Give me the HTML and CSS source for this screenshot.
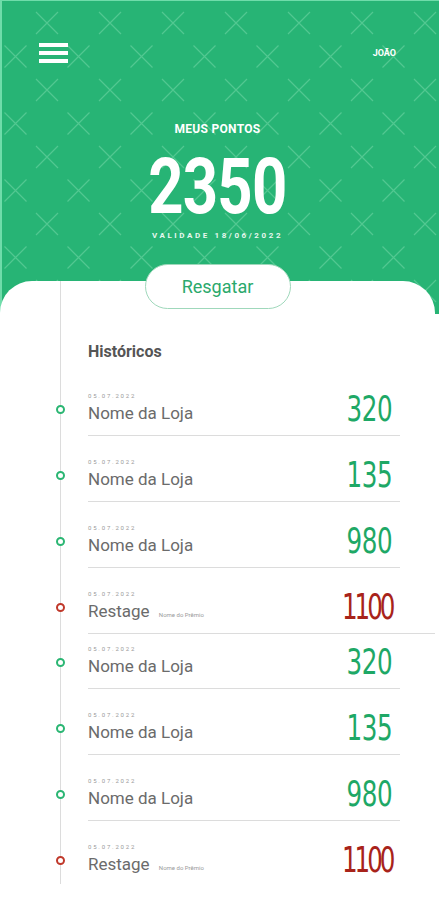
FILE: index.html
```html
<!DOCTYPE html>
<html lang="pt-BR">
<head>
  <meta charset="UTF-8" />
  <meta name="viewport" content="width=device-width, initial-scale=1.0" />
  <title>Meus Pontos</title>
  <link rel="stylesheet" href="styles.css">
</head>
<body>
  <header class="hero">
    <div class="topbar">
      <button class="menu" aria-label="Menu">
        <span></span><span></span><span></span>
      </button>
      <span class="user">JOÃO</span>
    </div>
    <div class="points-label">MEUS PONTOS</div>
    <div class="points">2350</div>
    <div class="validity">VALIDADE 18/06/2022</div>
    <button class="redeem">Resgatar</button>
  </header>

  <main class="card">
    <div class="timeline">
      <h2 class="title">Históricos</h2>

      <div class="entry">
        <div class="info">
          <div class="date">05.07.2022</div>
          <div class="name">Nome da Loja</div>
        </div>
        <div class="num">320</div>
      </div>
      <div class="entry">
        <div class="info">
          <div class="date">05.07.2022</div>
          <div class="name">Nome da Loja</div>
        </div>
        <div class="num">135</div>
      </div>
      <div class="entry">
        <div class="info">
          <div class="date">05.07.2022</div>
          <div class="name">Nome da Loja</div>
        </div>
        <div class="num">980</div>
      </div>
      <div class="entry redeemed wide">
        <div class="info">
          <div class="date">05.07.2022</div>
          <div class="name">Restage <small>Nome do Prêmio</small></div>
        </div>
        <div class="num">1100</div>
      </div>
      <div class="entry tight">
        <div class="info">
          <div class="date">05.07.2022</div>
          <div class="name">Nome da Loja</div>
        </div>
        <div class="num">320</div>
      </div>
      <div class="entry">
        <div class="info">
          <div class="date">05.07.2022</div>
          <div class="name">Nome da Loja</div>
        </div>
        <div class="num">135</div>
      </div>
      <div class="entry">
        <div class="info">
          <div class="date">05.07.2022</div>
          <div class="name">Nome da Loja</div>
        </div>
        <div class="num">980</div>
      </div>
      <div class="entry redeemed last">
        <div class="info">
          <div class="date">05.07.2022</div>
          <div class="name">Restage <small>Nome do Prêmio</small></div>
        </div>
        <div class="num">1100</div>
      </div>
    </div>
  </main>
</body>
</html>
```

FILE: styles.css
```css
body {
  margin: 0;
  background: #fff;
  font-family: Roboto, "Liberation Sans", sans-serif;
}

/* green header with the X pattern */
.hero {
  display: flex;
  flex-direction: column;
  align-items: center;
  padding: 42px 43px 5px 37px;
  border-top: 1px solid #6fdcaa;
  border-left: 2px solid #6fdcaa;
  background-color: #27b475;
  background-image: url("data:image/svg+xml,%3Csvg xmlns='http://www.w3.org/2000/svg' width='63' height='67'%3E%3Cg stroke='%2352c891' stroke-width='1.1' fill='none'%3E%3Cpath d='M34 9l22 22M56 9L34 31M2.5 42.5l22 22M24.5 42.5l-22 22'/%3E%3C/g%3E%3C/svg%3E");
  background-position: 0 2px;
}
.topbar {
  align-self: stretch;
  display: flex;
  justify-content: space-between;
  align-items: center;
  height: 20px;
}
.menu {
  display: flex;
  flex-direction: column;
  gap: 4px;
  width: 29px;
  padding: 0;
  border: 0;
  background: none;
}
.menu span {
  display: block;
  height: 4px;
  background: #fff;
}
.user {
  color: #fff;
  font-size: 9px;
  font-weight: bold;
}
.points-label {
  margin-top: 60px;
  color: #fff;
  font-size: 12px;
  line-height: 12px;
  font-weight: bold;
  letter-spacing: 0.3px;
}
.points {
  margin-top: 14px;
  color: #fff;
  font-family: Roboto, sans-serif;
  font-size: 77px;
  line-height: 77px;
  font-weight: bold;
  letter-spacing: -1px;
  transform: scaleX(0.8);
}
.validity {
  margin-top: 6px;
  color: #e8f7ef;
  font-size: 8px;
  line-height: 8px;
  font-weight: bold;
  letter-spacing: 2.6px;
}
.redeem {
  margin-top: 24px;
  width: 146px;
  height: 45px;
  border: 1px solid #9fd8bb;
  border-radius: 23px;
  background: #fff;
  color: #2aa96c;
  font-family: Roboto, sans-serif;
  font-size: 18px;
  position: relative;
  z-index: 1;
}

/* white sheet with the history */
.card {
  margin: -33px 4px 0 0;
  background: #fff;
  border-radius: 32px 32px 0 0;
}
.timeline {
  margin-left: 60px;
  padding-left: 27px;
  border-left: 1px solid #dcdcdc;
}
.title {
  margin: 0;
  padding: 61px 0 8px;
  color: #555;
  font-size: 16px;
  line-height: 20px;
  font-weight: bold;
}
.entry {
  position: relative;
  display: flex;
  justify-content: space-between;
  align-items: flex-end;
  margin-right: 35px;
  padding: 21px 8px 12px 0;
  border-bottom: 1px solid #dcdcdc;
}
.entry::before {
  content: "";
  position: absolute;
  left: -32px;
  top: 35px;
  width: 5px;
  height: 5px;
  border: 2px solid #2bb673;
  border-radius: 50%;
  background: #fff;
}
.entry.redeemed::before {
  border-color: #c0392b;
}
.entry.wide {
  margin-right: 0;
  padding-right: 43px;
}
.entry.tight {
  padding-top: 10px;
}
.entry.tight::before {
  top: 24px;
}
.entry.last {
  border-bottom: 0;
  padding-bottom: 10px;
}
.date {
  margin-bottom: 3px;
  color: #9a9a9a;
  font-size: 6px;
  line-height: 8px;
  letter-spacing: 1.8px;
}
.name {
  color: #6b6b6b;
  font-size: 17px;
  line-height: 20px;
}
.name small {
  margin-left: 5px;
  color: #9a9a9a;
  font-size: 6px;
  line-height: 0;
}
.num {
  margin-bottom: -4px;
  color: #1ea866;
  font-family: "DejaVu Sans Condensed", sans-serif;
  font-size: 36px;
  line-height: 36px;
  letter-spacing: -0.5px;
  transform: scaleX(0.76);
  transform-origin: right bottom;
}
.redeemed .num {
  color: #a8231a;
  letter-spacing: -4px;
}
```
